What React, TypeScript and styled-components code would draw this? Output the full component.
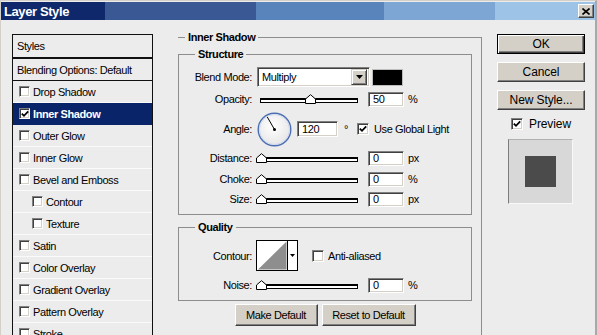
import React from 'react';
import styled, { createGlobalStyle } from 'styled-components';

const GlobalStyle = createGlobalStyle`
  html, body { margin: 0; padding: 0; background: #ececec; }
  body {
    font-family: "Liberation Sans", Arial, sans-serif;
    font-size: 11px;
    letter-spacing: -0.4px;
    color: #000;
  }
  * { box-sizing: border-box; }
`;

const Window = styled.div`
  width: 597px;
  height: 335px;
  overflow: hidden;
  background: #ececec;
  border-top: 1px solid #d4d0c8;
  border-left: 1px solid #d4d0c8;
  border-right: 2px solid #a9a9a9;
  padding-top: 1px;
  display: flex;
  flex-direction: column;
`;

const TitleBar = styled.div`
  height: 18px;
  flex-shrink: 0;
  display: flex;
  align-items: center;
  justify-content: space-between;
  padding: 0 1px 0 3px;
  background: linear-gradient(
    to right,
    #0e286b 0 104px,
    #3a5893 104px 255px,
    #5883bb 255px 383px,
    #7da6d5 383px 494px,
    #9dc3e7 494px 100%
  );
`;

const Title = styled.span`
  color: #fff;
  font-weight: bold;
  font-size: 13px;
  letter-spacing: -0.4px;
`;

const CloseButton = styled.div`
  width: 16px;
  height: 14px;
  background: #d4d0c8;
  border: 1px solid;
  border-color: #fff #404040 #404040 #fff;
  box-shadow: inset -1px -1px 0 #808080;
  display: flex;
  align-items: center;
  justify-content: center;
`;

const Body = styled.div`
  flex: 1;
  display: flex;
  align-items: flex-start;
`;

/* ---------- left list ---------- */

const StyleList = styled.div`
  margin: 14px 0 0 11px;
  width: 141px;
  border: 1px solid #111;
  border-bottom: none;
  display: flex;
  flex-direction: column;
  flex-shrink: 0;
`;

const ListHeader = styled.div<{ $h: number; $line: number }>`
  height: ${p => p.$h}px;
  display: flex;
  align-items: center;
  padding-left: 4px;
  border-bottom: ${p => p.$line}px solid #111;
`;

const ListItem = styled.div<{ $indent?: boolean; $selected?: boolean }>`
  height: 22px;
  display: flex;
  align-items: center;
  padding-left: ${p => (p.$indent ? 19 : 6)}px;
  border-bottom: 1px solid ${p => (p.$selected ? '#0a246a' : '#fafafa')};
  background: ${p => (p.$selected ? '#0a246a' : 'transparent')};
  color: ${p => (p.$selected ? '#fff' : '#000')};
  font-weight: ${p => (p.$selected ? 'bold' : 'normal')};
`;

const ItemText = styled.span`
  margin-left: 3px;
`;

const Box = styled.span<{ $size: number }>`
  width: ${p => p.$size}px;
  height: ${p => p.$size}px;
  flex-shrink: 0;
  background: #fff;
  border: 1px solid;
  border-color: #808080 #fff #fff #808080;
  box-shadow: inset 1px 1px 0 #404040, inset -1px -1px 0 #d4d0c8;
  display: flex;
  align-items: center;
  justify-content: center;
`;

function Checkbox({ checked, size = 12 }: { checked?: boolean; size?: number }) {
  return (
    <Box $size={size}>
      {checked && (
        <svg width="8" height="8" viewBox="0 0 8 8">
          <polyline points="0.8,3.6 3,5.8 7.2,1.4" fill="none" stroke="#000" strokeWidth="1.8" />
        </svg>
      )}
    </Box>
  );
}

/* ---------- center groups ---------- */

const Main = styled.fieldset`
  margin: 11px 0 0 25px;
  padding: 4px 0 40px 0;
  width: 304px;
  min-inline-size: 0;
  border: none;
  border-top: 1px solid #8d8d8d;
  border-right: 1px solid #8d8d8d;
  flex-shrink: 0;
`;

const Legend = styled.legend<{ $ml: number }>`
  margin-left: ${p => p.$ml}px;
  padding: 0 3px;
  font-weight: bold;
  line-height: 13px;
`;

const Group = styled.fieldset<{ $mt?: number }>`
  margin: ${p => p.$mt ?? 0}px 0 0 0;
  padding: 6px 0 8px 0;
  width: 294px;
  min-inline-size: 0;
  border: 1px solid #8d8d8d;
`;

const Row = styled.div<{ $h: number; $mt?: number }>`
  height: ${p => p.$h}px;
  margin-top: ${p => p.$mt ?? 0}px;
  display: flex;
  align-items: center;
`;

const Label = styled.span`
  width: 73px;
  flex-shrink: 0;
  text-align: right;
`;

const Field = styled.div<{ $w: number; $h?: number; $ml: number }>`
  width: ${p => p.$w}px;
  height: ${p => p.$h ?? 15}px;
  margin-left: ${p => p.$ml}px;
  flex-shrink: 0;
  background: #fff;
  border: 1px solid;
  border-color: #808080 #fff #fff #808080;
  box-shadow: inset 1px 1px 0 #404040, inset -1px -1px 0 #d4d0c8;
  padding-left: 4px;
  display: flex;
  align-items: center;
`;

const Unit = styled.span<{ $ml?: number }>`
  margin-left: ${p => p.$ml ?? 4}px;
`;

const Select = styled.div`
  width: 113px;
  height: 20px;
  margin-left: 5px;
  flex-shrink: 0;
  background: #fff;
  border: 1px solid;
  border-color: #808080 #fff #fff #808080;
  box-shadow: inset 1px 1px 0 #404040, inset -1px -1px 0 #d4d0c8;
  padding: 2px 2px 2px 4px;
  display: flex;
  align-items: center;
  justify-content: space-between;
`;

const DropButton = styled.div`
  width: 16px;
  height: 16px;
  background: #d4d0c8;
  border: 1px solid;
  border-color: #d4d0c8 #404040 #404040 #d4d0c8;
  box-shadow: inset 1px 1px 0 #fff, inset -1px -1px 0 #808080;
  display: flex;
  align-items: center;
  justify-content: center;
`;

const Swatch = styled.div`
  width: 31px;
  height: 17px;
  margin-left: 2px;
  background: #000;
  border: 1px solid #bdbdbd;
`;

const SliderWrap = styled.div`
  position: relative;
  width: 103px;
  height: 10px;
  margin-left: 4px;
  flex-shrink: 0;
  display: flex;
  align-items: flex-end;
  padding: 0 1px 1px 4px;
`;

const Track = styled.div`
  flex: 1;
  height: 5px;
  background: #fff;
  border: 1px solid #000;
  border-top-width: 2px;
`;

const Thumb = styled.svg`
  position: absolute;
  top: 0;
`;

function Slider({ value }: { value: number }) {
  return (
    <SliderWrap>
      <Track />
      <Thumb width="11" height="10" viewBox="0 0 11 10" style={{ left: Math.round((value / 100) * 97) }}>
        <polygon points="0.5,9.5 0.5,5 5.5,0.7 10.5,5 10.5,9.5" fill="#fff" stroke="#000" />
      </Thumb>
    </SliderWrap>
  );
}

const DialWrap = styled.div`
  margin-left: 5px;
  width: 35px;
  height: 35px;
  flex-shrink: 0;
`;

function Dial({ angle }: { angle: number }) {
  const r = 14.5;
  const a = (angle * Math.PI) / 180;
  return (
    <DialWrap>
      <svg width="35" height="35" viewBox="0 0 35 35">
        <defs>
          <radialGradient id="dialFill" cx="45%" cy="40%" r="65%">
            <stop offset="0" stopColor="#ffffff" />
            <stop offset="1" stopColor="#e4e4e4" />
          </radialGradient>
        </defs>
        <circle cx="17.5" cy="17.5" r="16.3" fill="url(#dialFill)" stroke="#4c6fb4" strokeWidth="1.4" />
        <circle cx="17.5" cy="17.5" r="15" fill="none" stroke="#c9d6ee" strokeWidth="0.8" />
        <line x1="17.5" y1="17.5" x2={17.5 + Math.cos(a) * r} y2={17.5 - Math.sin(a) * r} stroke="#000" strokeWidth="1" />
        <circle cx="17.5" cy="17.5" r="1.5" fill="#000" />
      </svg>
    </DialWrap>
  );
}

const ContourWrap = styled.div`
  margin-left: 4px;
  width: 42px;
  height: 31px;
  flex-shrink: 0;
`;

const CheckText = styled.span<{ $ml: number }>`
  margin-left: ${p => p.$ml}px;
`;

const ButtonRow = styled.div`
  width: 294px;
  margin-top: 3px;
  display: flex;
  justify-content: center;
  gap: 4px;
`;

const Button = styled.div<{ $w?: number; $h?: number; $default?: boolean }>`
  width: ${p => (p.$w ? `${p.$w}px` : '100%')};
  height: ${p => p.$h ?? 20}px;
  background: #d4d0c8;
  border: 1px solid;
  border-color: ${p => (p.$default ? '#000' : '#fff #404040 #404040 #fff')};
  box-shadow: ${p =>
    p.$default
      ? 'inset 1px 1px 0 #fff, inset -1px -1px 0 #404040, inset -2px -2px 0 #808080'
      : 'inset -1px -1px 0 #808080'};
  display: flex;
  align-items: center;
  justify-content: center;
  flex-shrink: 0;
`;

/* ---------- right column ---------- */

const Side = styled.div`
  margin: 14px 0 0 15px;
  width: 88px;
  display: flex;
  flex-direction: column;
  font-size: 12px;
  letter-spacing: -0.1px;
`;

const SideButton = styled(Button)<{ $mt?: number }>`
  margin-top: ${p => p.$mt ?? 0}px;
`;

const PreviewRow = styled.div`
  margin: 7px 0 0 14px;
  height: 13px;
  display: flex;
  align-items: center;
`;

const PreviewBox = styled.div`
  margin: 9px 0 0 11px;
  width: 65px;
  height: 65px;
  background: #d8d8d8;
  border: 1px solid;
  border-color: #b0b0b0 #f8f8f8 #f8f8f8 #7c7c7c;
  display: flex;
  align-items: center;
  justify-content: center;
`;

const PreviewSquare = styled.div`
  width: 31px;
  height: 31px;
  background: #4b4b4b;
`;

const effects: { name: string; checked?: boolean; indent?: boolean; selected?: boolean }[] = [
  { name: 'Drop Shadow' },
  { name: 'Inner Shadow', checked: true, selected: true },
  { name: 'Outer Glow' },
  { name: 'Inner Glow' },
  { name: 'Bevel and Emboss' },
  { name: 'Contour', indent: true },
  { name: 'Texture', indent: true },
  { name: 'Satin' },
  { name: 'Color Overlay' },
  { name: 'Gradient Overlay' },
  { name: 'Pattern Overlay' },
  { name: 'Stroke' },
];

function SliderRow({ label, value, unit, mt }: { label: string; value: number; unit: string; mt: number }) {
  return (
    <Row $h={14} $mt={mt}>
      <Label>{label}</Label>
      <Slider value={value} />
      <Field $w={36} $ml={9}>{value}</Field>
      <Unit>{unit}</Unit>
    </Row>
  );
}

export default function App() {
  return (
    <>
      <GlobalStyle />
      <Window>
        <TitleBar>
          <Title>Layer Style</Title>
          <CloseButton>
            <svg width="8" height="7" viewBox="0 0 8 7">
              <path d="M0.5 0.5 L7.5 6.5 M7.5 0.5 L0.5 6.5" stroke="#000" strokeWidth="1.6" />
            </svg>
          </CloseButton>
        </TitleBar>
        <Body>
          <StyleList>
            <ListHeader $h={24} $line={2}>Styles</ListHeader>
            <ListHeader $h={22} $line={1}>Blending Options: Default</ListHeader>
            {effects.map(e => (
              <ListItem key={e.name} $indent={e.indent} $selected={e.selected}>
                <Checkbox checked={e.checked} size={11} />
                <ItemText>{e.name}</ItemText>
              </ListItem>
            ))}
          </StyleList>

          <Main>
            <Legend $ml={7}>Inner Shadow</Legend>
            <Group>
              <Legend $ml={16}>Structure</Legend>
              <Row $h={20}>
                <Label>Blend Mode:</Label>
                <Select>
                  <span>Multiply</span>
                  <DropButton>
                    <svg width="7" height="4" viewBox="0 0 7 4">
                      <polygon points="0,0 7,0 3.5,4" fill="#000" />
                    </svg>
                  </DropButton>
                </Select>
                <Swatch />
              </Row>
              <SliderRow label="Opacity:" value={50} unit="%" mt={5} />
              <Row $h={34} $mt={6}>
                <Label>Angle:</Label>
                <Dial angle={120} />
                <Field $w={41} $h={16} $ml={5}>120</Field>
                <Unit $ml={6}>°</Unit>
                <CheckText $ml={9}>
                  <Checkbox checked size={12} />
                </CheckText>
                <CheckText $ml={5}>Use Global Light</CheckText>
              </Row>
              <SliderRow label="Distance:" value={0} unit="px" mt={5} />
              <SliderRow label="Choke:" value={0} unit="%" mt={7} />
              <SliderRow label="Size:" value={0} unit="px" mt={6} />
            </Group>

            <Group $mt={6}>
              <Legend $ml={16}>Quality</Legend>
              <Row $h={31}>
                <Label>Contour:</Label>
                <ContourWrap>
                  <svg width="42" height="31" viewBox="0 0 42 31">
                    <rect x="0.5" y="0.5" width="41" height="30" fill="#fff" stroke="#000" />
                    <polygon points="2,29.5 30.5,1.5 30.5,29.5" fill="#8e8e8e" />
                    <line x1="31.5" y1="0.5" x2="31.5" y2="30.5" stroke="#000" />
                    <polygon points="34,14 39,14 36.5,17" fill="#000" />
                  </svg>
                </ContourWrap>
                <CheckText $ml={14}>
                  <Checkbox size={12} />
                </CheckText>
                <CheckText $ml={4}>Anti-aliased</CheckText>
              </Row>
              <SliderRow label="Noise:" value={0} unit="%" mt={7} />
            </Group>

            <ButtonRow>
              <Button $w={83} $h={22}>Make Default</Button>
              <Button $w={94} $h={22}>Reset to Default</Button>
            </ButtonRow>
          </Main>

          <Side>
            <SideButton $default>OK</SideButton>
            <SideButton $mt={8}>Cancel</SideButton>
            <SideButton $mt={8}>New Style...</SideButton>
            <PreviewRow>
              <Checkbox checked size={12} />
              <CheckText $ml={6}>Preview</CheckText>
            </PreviewRow>
            <PreviewBox>
              <PreviewSquare />
            </PreviewBox>
          </Side>
        </Body>
      </Window>
    </>
  );
}
